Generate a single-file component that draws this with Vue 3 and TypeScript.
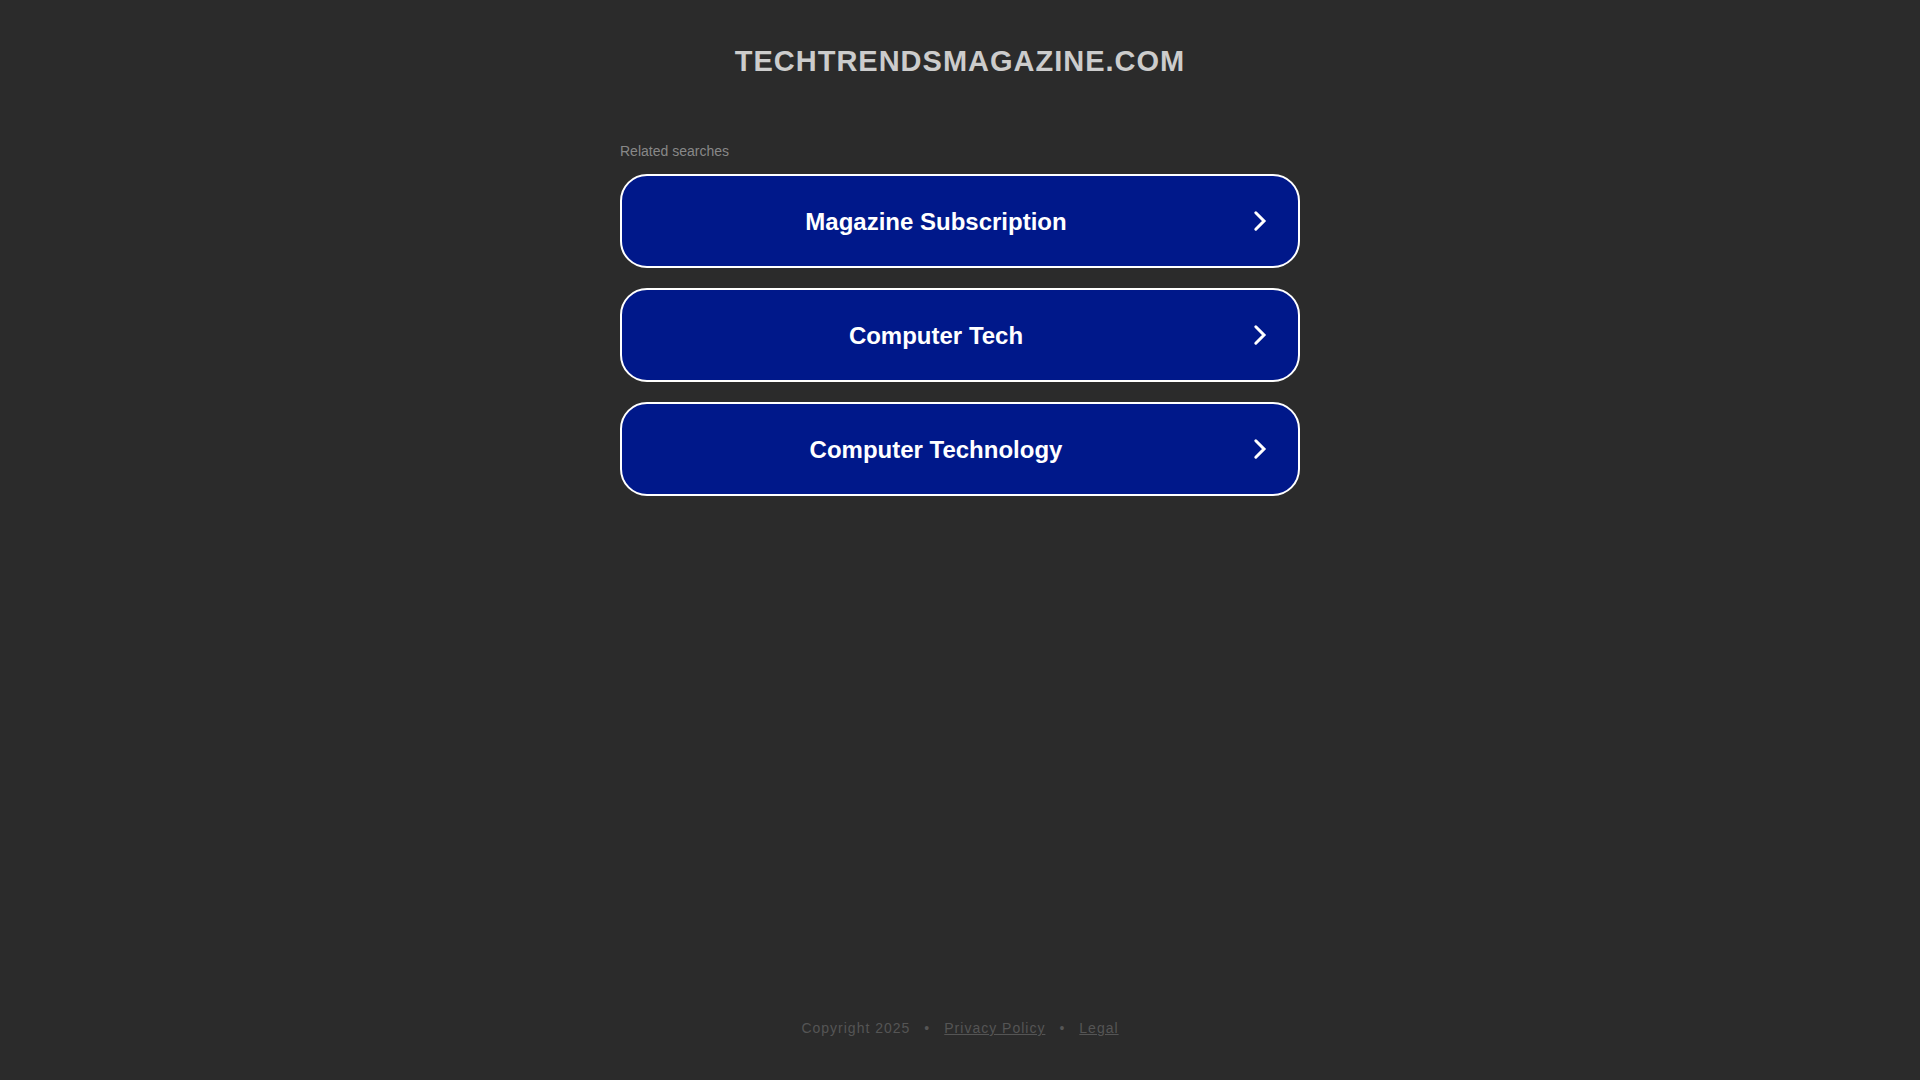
<script setup lang="ts">
const searches: string[] = ['Magazine Subscription', 'Computer Tech', 'Computer Technology']
</script>

<template>
  <div class="page">
    <header class="header">
      <h1 class="domain">techtrendsmagazine.com</h1>
    </header>
    <main class="content">
      <p class="caption">Related searches</p>
      <nav class="searches" aria-label="Related searches">
        <a v-for="term in searches" :key="term" class="card" href="#">
          <span class="term">{{ term }}</span>
          <svg class="chevron" width="24" height="24" viewBox="0 0 24 24" aria-hidden="true">
            <path d="M5.8 3.8 L14 12 L5.8 20.2" fill="none" stroke="#fff" stroke-width="3" stroke-linecap="round" />
          </svg>
        </a>
      </nav>
    </main>
    <footer class="footer">
      <span>Copyright 2025</span>
      <span class="dot">•</span>
      <a href="#">Privacy Policy</a>
      <span class="dot">•</span>
      <a href="#">Legal</a>
    </footer>
  </div>
</template>

<style>
body {
  margin: 0;
  background: #2b2b2b;
}
</style>

<style scoped>
.page {
  display: flex;
  flex-direction: column;
  min-height: 100vh;
  box-sizing: border-box;
  padding: 40px 20px;
  font-family: "Liberation Sans", Arial, sans-serif;
}

.header {
  text-align: center;
}

.domain {
  margin: 0;
  font-size: 29px;
  line-height: 42px;
  letter-spacing: 1px;
  text-transform: uppercase;
  color: #ccc;
}

.content {
  flex: 1;
  width: 100%;
  max-width: 680px;
  margin: 60px auto 0;
}

.caption {
  margin: 0;
  font-size: 14px;
  line-height: 18px;
  color: #888;
}

.searches {
  display: flex;
  flex-direction: column;
  gap: 20px;
  margin-top: 14px;
}

.card {
  display: flex;
  align-items: center;
  padding: 29px 24px 29px 0;
  border: 2px solid #fff;
  border-radius: 27px;
  background: #00188a;
  color: #fff;
  text-decoration: none;
}

.term {
  flex: 1;
  padding-top: 2px;
  font-size: 24px;
  font-weight: 700;
  line-height: 30px;
  text-align: center;
}

.chevron {
  flex: none;
}

.footer {
  display: flex;
  justify-content: center;
  gap: 14px;
  font-size: 14px;
  line-height: 24px;
  letter-spacing: 1px;
  color: #555;
}

.footer a {
  color: inherit;
}
</style>
